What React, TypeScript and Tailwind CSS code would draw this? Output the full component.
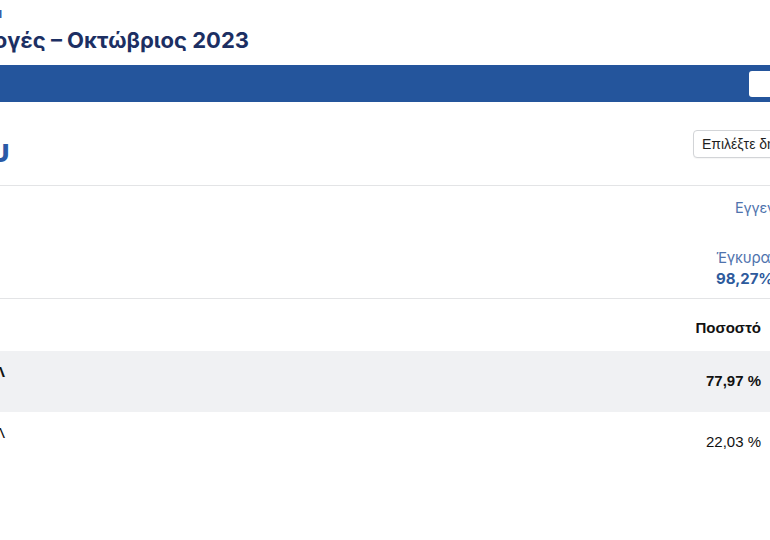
export default function App() {
  return (
    <div className="h-[540px] w-[770px] overflow-hidden bg-white font-['Inter',sans-serif]">
      {/* top header, page scrolled sideways so left part is cut */}
      <div className="pt-[6px]">
        <div className="-ml-[898px] w-[900px] whitespace-nowrap text-right text-[11px] font-bold leading-[16px] text-[#2c5ba6]">
          ΑΥΤΟΔΙΟΙΚΗΤΙΚΕΣ ΕΚΛΟΓΕΣ ΙΙ
        </div>
        <h1 className="mt-[4px] -ml-[651px] w-[900px] whitespace-nowrap text-right text-[22px] font-bold leading-[28px] text-[#1c2f63]">
          Περιφερειακές &amp; Δημοτικές Εκλογές – Οκτώβριος 2023
        </h1>
      </div>

      {/* blue nav bar */}
      <div className="mt-[11px] flex h-[37px] items-center justify-end bg-[#24559c]">
        <div className="-mr-[40px] h-[26px] w-[61px] shrink-0 rounded-l-[3px] bg-white" />
      </div>

      {/* heading row */}
      <div className="flex h-[83px] items-start justify-between">
        <h2 className="mt-[29px] -ml-[890px] w-[900px] shrink-0 whitespace-nowrap text-right text-[32px] font-bold leading-[40px] text-[#2a5aa6]">
          Αποτελέσματα Δήμου
        </h2>
        <button className="mt-[28px] -mr-[83px] flex h-[28px] w-[160px] shrink-0 items-center rounded-[4px] border border-[#d2d4d7] bg-white px-[8px] font-['Liberation_Sans',sans-serif] text-[14px] text-[#1f1f1f] shadow-[0_1px_1px_rgba(0,0,0,0.04)]">
          Επιλέξτε δήμο ▾
        </button>
      </div>

      {/* stats */}
      <div className="border-t border-[#e3e4e6]">
        <div className="ml-[735px] mt-[12px] whitespace-nowrap text-[14.5px] leading-[20px] tracking-[-0.2px] text-[#4f73ad]">
          Εγγεγραμμένοι
        </div>
        <div className="ml-[716px] mt-[30px] whitespace-nowrap text-[15px] leading-[20px] tracking-[-0.2px] text-[#4f73ad]">
          Έγκυρα
        </div>
        <div className="ml-[716px] whitespace-nowrap text-[15px] font-bold leading-[22px] text-[#2d5a9c]">
          98,27%
        </div>
      </div>

      {/* results table */}
      <div className="mt-[8px] border-t border-[#e3e4e6] font-['Liberation_Sans',sans-serif] text-[15px] text-[#111]">
        <div className="flex h-[52px] items-end justify-end pb-[12px] pr-[9px] font-bold">
          Ποσοστό
        </div>
        <div className="flex h-[61px] justify-between bg-[#f0f1f3]">
          <div className="mt-[11px] -ml-[895px] w-[900px] shrink-0 whitespace-nowrap text-right font-bold leading-[20px]">
            ΔΗΜΟΤΙΚΗ ΚΙΝΗΣΗ ΑΝΕΞΑΡΤΗΤΗ ΠΟΡΕΙΑ ΛΑΜΠΡΟΣ ΜΙΧΑΛ
          </div>
          <div className="self-center pr-[9px] font-bold">77,97 %</div>
        </div>
        <div className="flex h-[61px] justify-between">
          <div className="mt-[11px] -ml-[895px] w-[900px] shrink-0 whitespace-nowrap text-right leading-[20px]">
            ΝΕΑ ΑΡΧΗ ΓΙΑ ΤΟΝ ΔΗΜΟ ΜΑΣ ΠΑΝΤΕΛΗΣ ΚΑΛ
          </div>
          <div className="self-center pr-[9px]">22,03 %</div>
        </div>
      </div>
    </div>
  );
}
